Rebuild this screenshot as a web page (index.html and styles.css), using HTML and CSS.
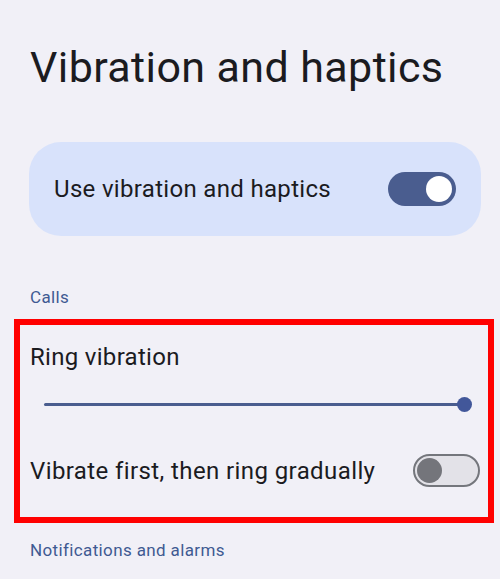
FILE: index.html
```html
<!DOCTYPE html>
<html lang="en">
<head>
<meta charset="utf-8">
<title>Vibration and haptics</title>
<link rel="stylesheet" href="styles.css">
</head>
<body>
<main class="page">
  <h1 class="title">Vibration and haptics</h1>
  <div class="card">
    <span class="card-label">Use vibration and haptics</span>
    <div class="switch switch-on"><span class="thumb"></span></div>
  </div>
  <div class="section-label calls">Calls</div>
  <section class="highlight">
    <div class="pref-title">Ring vibration</div>
    <div class="slider"><div class="track"></div><div class="knob"></div></div>
    <div class="row">
      <span class="row-label">Vibrate first, then ring gradually</span>
      <div class="switch switch-off"><span class="thumb"></span></div>
    </div>
  </section>
  <div class="section-label notif">Notifications and alarms</div>
</main>
</body>
</html>
```
FILE: styles.css
```css
html, body {
  margin: 0;
  padding: 0;
  background: #f1f0f7;
}
body {
  font-family: Roboto, "Noto Sans", sans-serif;
  color: #1b1b1f;
  width: 500px;
  height: 579px;
  overflow: hidden;
}
.page {
  display: flex;
  flex-direction: column;
}
.title {
  margin: 41px 0 0 30px;
  font-size: 43px;
  line-height: 52px;
  font-weight: 400;
  letter-spacing: 0.4px;
}
.card {
  margin: 49px 19px 0 29px;
  height: 94px;
  border-radius: 32px;
  background: #d8e2fb;
  display: flex;
  align-items: center;
  justify-content: space-between;
  padding: 0 25px;
}
.card-label {
  font-size: 24px;
  letter-spacing: 0.32px;
}
.switch {
  box-sizing: border-box;
  width: 68px;
  height: 34px;
  border-radius: 17px;
  display: flex;
  align-items: center;
  padding: 0 4px;
}
.switch-on {
  background: #4a5d8f;
  justify-content: flex-end;
}
.switch-on .thumb {
  width: 26px;
  height: 26px;
  border-radius: 50%;
  background: #ffffff;
}
.switch-off {
  width: 67px;
  height: 33px;
  background: #e3e2e8;
  border: 2px solid #74767c;
  padding: 0 2px;
}
.switch-off .thumb {
  width: 25px;
  height: 25px;
  border-radius: 50%;
  background: #74757b;
}
.section-label {
  font-size: 17px;
  color: #3f5a92;
  margin-left: 30px;
  line-height: 22px;
  letter-spacing: 0.37px;
}
.calls {
  margin-top: 50px;
}
.highlight {
  margin: 11px 6px 0 14px;
  border: 6px solid #ff0000;
  height: 192px;
  padding: 0 0 0 10px;
  display: flex;
  flex-direction: column;
}
.pref-title {
  font-size: 24px;
  line-height: 32px;
  margin-top: 16px;
  letter-spacing: 0.3px;
}
.slider {
  position: relative;
  height: 16px;
  margin: 23px 23px 0 14px;
  display: flex;
  align-items: center;
}
.track {
  flex: 1;
  height: 3px;
  background: #4a5d8f;
  border-radius: 2px;
}
.knob {
  position: absolute;
  right: -7px;
  top: 1px;
  width: 15px;
  height: 15px;
  border-radius: 50%;
  background: #42579a;
}
.row {
  display: flex;
  align-items: center;
  justify-content: space-between;
  margin-top: 42px;
  padding-right: 8px;
}
.row-label {
  font-size: 24px;
  letter-spacing: 0.4px;
}
.notif {
  margin-top: 16px;
}
```
